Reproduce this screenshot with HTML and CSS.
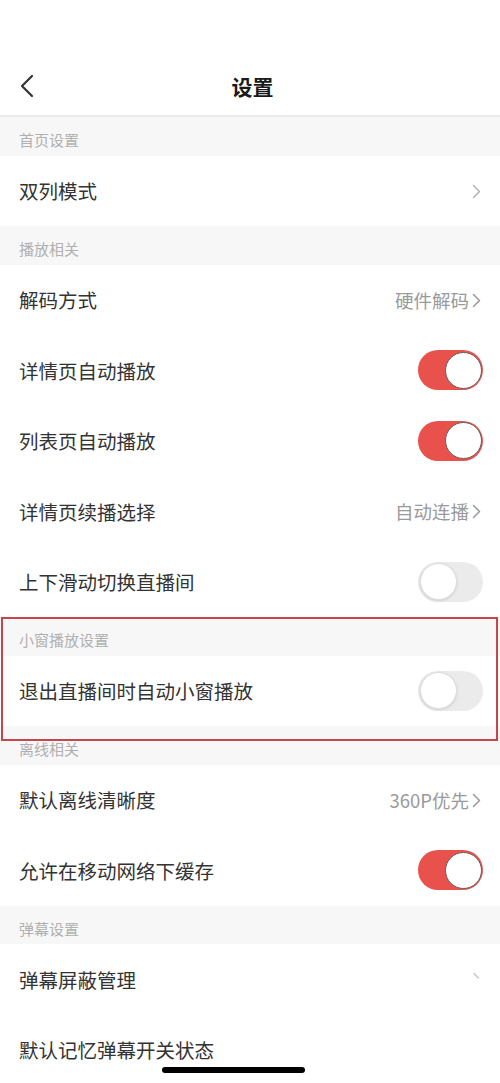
FILE: index.html
```html
<!DOCTYPE html>
<html lang="zh-CN">
<head>
<meta charset="utf-8">
<title>设置</title>
<link rel="stylesheet" href="styles.css">
</head>
<body>
<div class="page">
  <div class="status"></div>
  <header class="nav">
    <div class="back">
      <svg width="16" height="24" viewBox="0 0 16 24"><path d="M13 2 L3 12 L13 22" fill="none" stroke="#333" stroke-width="2.2" stroke-linecap="round" stroke-linejoin="round"/></svg>
    </div>
    <div class="title">设置</div>
    <div class="spacer"></div>
  </header>

  <div class="sec">首页设置</div>
  <div class="row"><span class="label">双列模式</span><span class="value"><svg class="chev" width="9" height="15" viewBox="0 0 9 15"><path d="M1.5 1.5 L7.5 7.5 L1.5 13.5" fill="none" stroke="#b3b3b3" stroke-width="1.5" stroke-linecap="round" stroke-linejoin="round"/></svg></span></div>

  <div class="sec">播放相关</div>
  <div class="row"><span class="label">解码方式</span><span class="value">硬件解码<svg class="chev" width="9" height="15" viewBox="0 0 9 15"><path d="M1.5 1.5 L7.5 7.5 L1.5 13.5" fill="none" stroke="#999" stroke-width="1.5" stroke-linecap="round" stroke-linejoin="round"/></svg></span></div>
  <div class="row"><span class="label">详情页自动播放</span><span class="toggle on"><span class="knob"></span></span></div>
  <div class="row"><span class="label">列表页自动播放</span><span class="toggle on"><span class="knob"></span></span></div>
  <div class="row"><span class="label">详情页续播选择</span><span class="value">自动连播<svg class="chev" width="9" height="15" viewBox="0 0 9 15"><path d="M1.5 1.5 L7.5 7.5 L1.5 13.5" fill="none" stroke="#999" stroke-width="1.5" stroke-linecap="round" stroke-linejoin="round"/></svg></span></div>
  <div class="row"><span class="label">上下滑动切换直播间</span><span class="toggle off"><span class="knob"></span></span></div>

  <div class="highlight-wrap">
    <div class="sec">小窗播放设置</div>
    <div class="row"><span class="label">退出直播间时自动小窗播放</span><span class="toggle off"><span class="knob"></span></span></div>
    <div class="mark"></div>
  </div>

  <div class="sec">离线相关</div>
  <div class="row"><span class="label">默认离线清晰度</span><span class="value">360P优先<svg class="chev" width="9" height="15" viewBox="0 0 9 15"><path d="M1.5 1.5 L7.5 7.5 L1.5 13.5" fill="none" stroke="#999" stroke-width="1.5" stroke-linecap="round" stroke-linejoin="round"/></svg></span></div>
  <div class="row"><span class="label">允许在移动网络下缓存</span><span class="toggle on"><span class="knob"></span></span></div>

  <div class="sec">弹幕设置</div>
  <div class="row"><span class="label">弹幕屏蔽管理</span><span class="value"><svg class="chev faint" width="9" height="15" viewBox="0 0 9 15"><path d="M2 1.5 L6.5 6" fill="none" stroke="#c8c8c8" stroke-width="1.5" stroke-linecap="round"/></svg></span></div>
  <div class="row"><span class="label">默认记忆弹幕开关状态</span></div>

  <div class="home-bar"></div>
</div>
</body>
</html>
```

FILE: styles.css
```css
* { box-sizing: border-box; }
html, body {
  margin: 0;
  padding: 0;
  background: #ffffff;
}
body {
  font-family: "Noto Sans CJK SC", "Noto Sans", sans-serif;
  color: #333333;
}
.page {
  position: relative;
  width: 500px;
  height: 1083px;
  overflow: hidden;
  background: #ffffff;
}
.status {
  height: 59px;
}
.nav {
  height: 58px;
  display: flex;
  align-items: center;
  padding: 0 14px 2px 19px;
  border-bottom: 2px solid #ececec;
}
.back {
  width: 60px;
  display: flex;
  align-items: center;
}
.back svg { display: block; }
.title {
  flex: 1;
  text-align: center;
  font-size: 21px;
  font-weight: 700;
  color: #1a1a1a;
}
.spacer { width: 60px; }

.sec {
  height: 38.5px;
  background: #f7f7f7;
  color: #b0b0b0;
  font-size: 15px;
  padding: 7px 0 0 19px;
  display: flex;
  align-items: center;
}
.row {
  height: 70.5px;
  display: flex;
  align-items: center;
  justify-content: space-between;
  padding: 0 17px 0 19px;
  background: #ffffff;
}
.label {
  font-size: 19.5px;
  color: #333333;
}
.value {
  display: flex;
  align-items: center;
  gap: 3px;
  font-size: 18.5px;
  color: #9a9a9a;
  padding-right: 2px;
}
.chev { display: block; margin-top: 1px; }

.toggle {
  position: relative;
  width: 65px;
  height: 40px;
  border-radius: 20px;
  display: flex;
  align-items: center;
  padding: 0 1.5px;
}
.toggle.on {
  background: #e9524c;
  justify-content: flex-end;
}
.toggle.off {
  background: #ebebeb;
  justify-content: flex-start;
}
.knob {
  width: 37px;
  height: 37px;
  border-radius: 50%;
  background: #ffffff;
}
.toggle.on .knob {
  border: 1.5px solid #6e5a5a;
}
.toggle.off .knob {
  border: 1px solid #dcdcdc;
  box-shadow: 0 1px 3px rgba(0,0,0,0.12);
}

.highlight-wrap {
  position: relative;
}
.mark {
  position: absolute;
  left: 1px;
  top: 0;
  width: 497px;
  height: 124px;
  border: 2px solid #c8454d;
  pointer-events: none;
}

.home-bar {
  position: absolute;
  left: 162px;
  bottom: 10px;
  width: 143px;
  height: 6px;
  border-radius: 3px;
  background: #000000;
}
```
